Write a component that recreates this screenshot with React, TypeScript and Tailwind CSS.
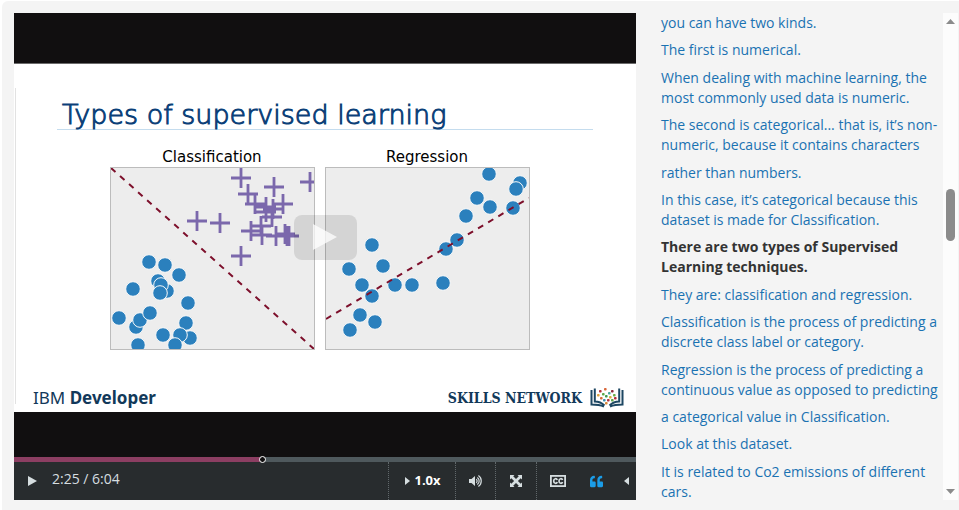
import { FaQuoteLeft } from "react-icons/fa";

type Point = [number, number];

const clusterDots: Point[] = [
  [39, 95], [55, 98], [69, 108], [48, 114], [57, 124], [51, 118], [50, 126], [23, 122],
  [78, 136], [9, 151], [26, 160], [30, 153], [40, 146], [76, 156], [80, 171], [70, 168],
  [53, 168], [65, 178], [28, 178],
];

const crosses: Point[] = [
  [131, 11], [164, 20], [200, 15], [138, 27], [145, 37], [173, 37], [156, 40], [156, 45],
  [162, 50], [87, 54], [110, 56], [141, 64], [151, 59], [152, 68], [163, 42], [166, 69],
  [175, 67], [179, 69], [177, 69], [131, 89],
];

const regressionDots: Point[] = [
  [164, 7], [195, 16], [191, 22], [152, 31], [165, 40], [188, 41], [141, 49], [132, 73],
  [121, 82], [47, 78], [24, 102], [58, 99], [37, 118], [70, 118], [87, 118], [118, 116],
  [47, 129], [35, 148], [50, 155], [25, 163],
];

const cues = [
  "you can have two kinds.",
  "The first is numerical.",
  "When dealing with machine learning, the most commonly used data is numeric.",
  "The second is categorical... that is, it’s non-numeric, because it contains characters",
  "rather than numbers.",
  "In this case, it’s categorical because this dataset is made for Classification.",
  "There are two types of Supervised Learning techniques.",
  "They are: classification and regression.",
  "Classification is the process of predicting a discrete class label or category.",
  "Regression is the process of predicting a continuous value as opposed to predicting",
  "a categorical value in Classification.",
  "Look at this dataset.",
  "It is related to Co2 emissions of different cars.",
];
const activeCue = 6;

function Dots({ points }: { points: Point[] }) {
  return (
    <>
      {points.map(([x, y], i) => (
        <circle key={i} cx={x} cy={y} r="7.3" fill="#2b80bd" stroke="#fafafa" strokeWidth="1" />
      ))}
    </>
  );
}

function ClassificationPlot() {
  return (
    <svg viewBox="0 0 205 183" className="block w-full" role="img" aria-label="Classification plot">
      <rect x="0.5" y="0.5" width="204" height="182" fill="#ededed" />
      <Dots points={clusterDots} />
      <path
        d={crosses.map(([x, y]) => `M${x - 10} ${y}h20M${x} ${y - 10}v20`).join("")}
        stroke="#7b68ac"
        strokeWidth="2.8"
      />
      <path d="M1 1L204 182" stroke="#7d0f2b" strokeWidth="2" strokeDasharray="6 6.1" />
      <rect x="0.5" y="0.5" width="204" height="182" fill="none" stroke="#bcbcbc" />
    </svg>
  );
}

function RegressionPlot() {
  return (
    <svg viewBox="0 0 205 183" className="block w-full" role="img" aria-label="Regression plot">
      <rect x="0.5" y="0.5" width="204" height="182" fill="#ededed" />
      <Dots points={regressionDots} />
      <path d="M1 152L204 31" stroke="#7d0f2b" strokeWidth="2" strokeDasharray="6 5.8" />
      <rect x="0.5" y="0.5" width="204" height="182" fill="none" stroke="#bcbcbc" />
    </svg>
  );
}

function BookLogo() {
  const bits: [number, number, string][] = [
    [10, 3, "#b5323c"], [15, 1, "#d9683c"], [22, 3, "#8c2b3b"], [19, 5, "#4aa7a0"],
    [8, 7, "#e0a23c"], [13, 6, "#5fa84a"], [16, 8, "#3f9a52"], [24, 7, "#6bb04a"],
    [11, 10, "#d36b3a"], [20, 9, "#d6b13c"], [14, 12, "#3d93b5"], [18, 12, "#b5323c"],
    [22, 12, "#5fa84a"], [16, 15, "#d98a3c"], [25, 10, "#b5323c"],
  ];
  return (
    <svg viewBox="0 0 34 21" className="h-[21px] w-[34px]" aria-hidden="true">
      <path d="M1.5 3v14.5c5 0 9 .5 12.5 2M4.8 1.5v13c4 0 7.2 1.5 9.7 4" fill="none" stroke="#1d4763" strokeWidth="2" />
      <path d="M32.5 3v14.5c-5 0-9 .5-12.5 2M29.2 1.5v13c-4 0-7.2 1.5-9.7 4" fill="none" stroke="#1d4763" strokeWidth="2" />
      {bits.map(([x, y, c], i) => (
        <rect key={i} x={x - 1} y={y} width="2.6" height="2.6" rx="0.8" fill={c} />
      ))}
    </svg>
  );
}

function VolumeIcon() {
  return (
    <svg viewBox="0 0 13 12" className="h-3 w-[13px]" fill="none" stroke="currentColor" aria-hidden="true">
      <path d="M0 4h2.5L6 1v10L2.5 8H0z" fill="currentColor" stroke="none" />
      <path d="M7.2 4.3c1.2.8 1.2 2.6 0 3.4M8.3 2.4c2.5 1.7 2.5 5.5 0 7.2M9.4.6c3.8 2.5 3.8 8.3 0 10.8" strokeWidth="1.2" />
    </svg>
  );
}

function ArrowsIcon() {
  return (
    <svg viewBox="0 0 12 12" className="size-3" fill="currentColor" aria-hidden="true">
      <path d="M0 0h4.5L3.2 1.3 6 4.1l2.8-2.8L7.5 0H12v4.5l-1.3-1.3L7.9 6l2.8 2.8L12 7.5V12H7.5l1.3-1.3L6 7.9l-2.8 2.8L4.5 12H0V7.5l1.3 1.3L4.1 6 1.3 3.2 0 4.5z" />
    </svg>
  );
}

function CaptionsIcon() {
  return (
    <svg viewBox="0 0 16 12" className="h-3 w-4" fill="none" stroke="currentColor" aria-hidden="true">
      <rect x="0.9" y="0.9" width="14.2" height="10.2" strokeWidth="1.8" />
      <path d="M7.2 5C6.7 3.2 3.7 3.1 3.7 6s3 2.8 3.5 1M12.500 5C12 3.2 9 3.1 9 6s3 2.8 3.5 1" strokeWidth="1.7" />
    </svg>
  );
}

function Caret({ direction }: { direction: "left" | "right" | "up" | "down" }) {
  const d = {
    left: "M5 0v8L0 4z",
    right: "M0 0v8l5-4z",
    up: "M0 5h9L4.5 0z",
    down: "M0 0h9L4.5 5z",
  }[direction];
  const vertical = direction === "up" || direction === "down";
  return (
    <svg
      viewBox={vertical ? "0 0 9 5" : "0 0 5 8"}
      className={vertical ? "h-[5px] w-[9px]" : "h-2 w-[5px]"}
      fill="currentColor"
      aria-hidden="true"
    >
      <path d={d} />
    </svg>
  );
}

function Slide() {
  return (
    <div className="relative flex h-[349px] flex-col border-t border-[#6b6b6b] bg-white">
      <div className="absolute top-6 bottom-2 left-px w-px bg-[#e2e2e2]" />
      <h1 className="mx-[43px] mt-9 border-b border-[#c4dcee] pl-[5px] font-['DejaVu_Sans'] text-[27px] leading-[29px] font-extralight whitespace-nowrap text-[#0b3f78] [-webkit-text-stroke:1px_#0b3f78]">
        Types of supervised learning
      </h1>
      <div className="mt-[17px] flex justify-center gap-[10px] pr-[11px] font-['DejaVu_Sans'] text-[15px] leading-5 text-black">
        <figure className="w-[205px]">
          <figcaption className="text-center">Classification</figcaption>
          <ClassificationPlot />
        </figure>
        <figure className="w-[205px]">
          <figcaption className="text-center">Regression</figcaption>
          <RegressionPlot />
        </figure>
      </div>
      <div className="mt-auto flex h-7 items-center justify-between pr-3 pb-px pl-[19px] text-[#12395a]">
        <p className="font-['Noto_Sans'] text-[17px] leading-6">
          IBM <b className="font-bold">Developer</b>
        </p>
        <p className="flex items-center gap-2 font-['DejaVu_Serif_Condensed','DejaVu_Serif',serif] text-[14px] leading-6 font-bold">
          SKILLS NETWORK
          <BookLogo />
        </p>
      </div>
      <div className="absolute inset-0 flex items-center justify-center pb-0.5">
        <button
          aria-label="Play video"
          className="flex h-[45px] w-[63px] items-center justify-center rounded-lg bg-black/10"
        >
          <svg viewBox="0 0 24 26" className="h-[26px] w-6 fill-white/75" aria-hidden="true">
            <path d="M0 0v26L24 13z" />
          </svg>
        </button>
      </div>
    </div>
  );
}

function Controls() {
  const divided = "flex items-center justify-center border-l border-dotted border-[#61686b]";
  return (
    <div className="flex h-[38px] bg-[#282c2e] text-[#d6dee0]">
      <button aria-label="Play" className="flex w-[37px] items-center justify-center pb-px">
        <svg viewBox="0 0 9 10" className="h-[10px] w-[9px]" fill="currentColor" aria-hidden="true">
          <path d="M0 0v10l9-5z" />
        </svg>
      </button>
      <span className="flex items-center pb-1 pl-px text-sm">2:25 / 6:04</span>
      <div className="ml-auto flex">
        <button className={`${divided} w-[67px] gap-1 pl-0.5 text-[13px] font-bold`}>
          <Caret direction="right" />
          <span className="text-white">1.0x</span>
        </button>
        <button aria-label="Volume" className={`${divided} w-10`}>
          <VolumeIcon />
        </button>
        <button aria-label="Fill browser" className={`${divided} w-[41px]`}>
          <ArrowsIcon />
        </button>
        <button aria-label="Closed captions" className={`${divided} w-[42px]`}>
          <CaptionsIcon />
        </button>
        <button aria-label="Transcript" className="flex w-9 items-center justify-center text-[#1b9de8]">
          <FaQuoteLeft className="size-[13px]" />
        </button>
        <button aria-label="Language menu" className="flex w-[22px] items-center justify-center pl-0.5">
          <Caret direction="left" />
        </button>
      </div>
    </div>
  );
}

export default function App() {
  return (
    <main className="ml-[2px] mt-px flex gap-[25px] rounded-tl-md bg-[#f4f4f4] pt-3 pr-px pb-[10px] pl-3 font-['Open_Sans',sans-serif]">
      <section className="min-w-0 flex-1 bg-[#110f10]" aria-label="Video player">
        <div className="h-[50px]" />
        <Slide />
        <div className="h-[45px]" />
        <input
          type="range"
          aria-label="Video position"
          min={0}
          max={364}
          defaultValue={145}
          className="block h-[5px] w-full appearance-none bg-[linear-gradient(to_right,#8c3e62_40%,#4f595d_40%)] [&::-webkit-slider-thumb]:size-[7px] [&::-webkit-slider-thumb]:appearance-none [&::-webkit-slider-thumb]:rounded-full [&::-webkit-slider-thumb]:border [&::-webkit-slider-thumb]:border-white [&::-webkit-slider-thumb]:bg-[#110f10]"
        />
        <Controls />
      </section>
      <aside className="flex w-[297px] shrink-0" aria-label="Transcript">
        <ol className="-mb-0.5 flex min-w-0 flex-1 flex-col justify-between text-sm leading-5 text-[#1a72b2]">
          {cues.map((cue, i) => (
            <li key={cue}>
              <a href="#" className={i === activeCue ? "font-bold text-[#333333]" : ""}>
                {cue}
              </a>
            </li>
          ))}
        </ol>
        <div className="flex w-[15px] flex-col items-center bg-[#fcfcfc] py-[6px] text-[#8b8b8b]">
          <button aria-label="Scroll up">
            <Caret direction="up" />
          </button>
          <div className="flex w-[9px] flex-1 flex-col">
            <div className="grow-[164]" />
            <div className="h-[52px] rounded-full bg-[#8b8b8b]" />
            <div className="grow-[247]" />
          </div>
          <button aria-label="Scroll down">
            <Caret direction="down" />
          </button>
        </div>
      </aside>
    </main>
  );
}
